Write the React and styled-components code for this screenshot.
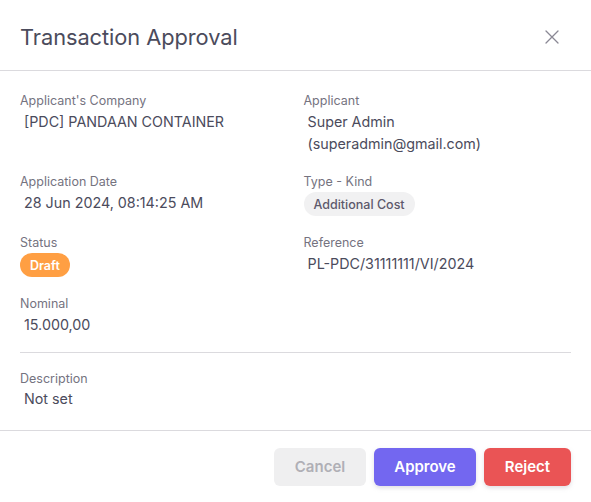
import React from "react";
import styled, { createGlobalStyle } from "styled-components";

const Global = createGlobalStyle`
  html, body { margin: 0; padding: 0; background: #fff; }
  body { font-family: "Inter", "Noto Sans", sans-serif; -webkit-font-smoothing: antialiased; }
`;

const Dialog = styled.div`
  width: 591px;
  height: 502px;
  background: #fff;
  display: flex;
  flex-direction: column;
  box-sizing: border-box;
`;

const Header = styled.div`
  height: 71px;
  box-sizing: border-box;
  display: flex;
  align-items: center;
  justify-content: space-between;
  padding: 3px 31px 0 20px;
  border-bottom: 1px solid #dbdade;
`;

const Title = styled.h2`
  margin: 0;
  font-size: 21.8px;
  font-weight: 400;
  color: #4b4b5c;
  letter-spacing: -0.05px;
`;

const CloseBtn = styled.button`
  border: 0;
  background: none;
  padding: 0;
  display: flex;
  color: #8a8894;
  cursor: pointer;
`;

const Body = styled.div`
  padding: 21px 20px 0;
  flex: 1;
`;

const Grid = styled.div`
  display: grid;
  grid-template-columns: 1fr 1fr;
  column-gap: 16px;
  row-gap: 18px;
`;

const Field = styled.div`
  display: flex;
  flex-direction: column;
  align-items: flex-start;
`;

const Label = styled.div`
  font-size: 12.5px;
  line-height: 18px;
  color: #75737f;
`;

const Value = styled.div`
  font-size: 14.3px;
  line-height: 22px;
  color: #4b4b5c;
  padding-left: 4px;
  margin-top: ${p => (p.$tight ? 0 : 1)}px;
`;

const Chip = styled.span`
  display: inline-flex;
  align-items: center;
  height: 24px;
  margin-top: 1px;
  padding: 0 10px;
  border-radius: 12px;
  font-size: 12.5px;
  font-weight: ${p => (p.$tone === "warning" ? 600 : 500)};
  background: ${p => (p.$tone === "warning" ? "#ff9f43" : "#f1f1f2")};
  color: ${p => (p.$tone === "warning" ? "#fff" : "#5d596c")};
`;

const Divider = styled.hr`
  border: 0;
  border-top: 1px solid #dbdade;
  margin: 16px 0 17px;
`;

const Footer = styled.div`
  border-top: 1px solid #dbdade;
  height: 72px;
  box-sizing: border-box;
  display: flex;
  align-items: center;
  justify-content: flex-end;
  gap: 8px;
  padding: 0 20px 0;
`;

const Button = styled.button`
  height: 38px;
  border: 0;
  border-radius: 6px;
  font-family: inherit;
  font-size: 15px;
  font-weight: 600;
  cursor: pointer;
  width: ${p => p.$w}px;
  background: ${p => ({ primary: "#7367f0", danger: "#ea5455", muted: "#efeff0" }[p.$variant])};
  color: ${p => (p.$variant === "muted" ? "#b0afb6" : "#fff")};
  box-shadow: ${p => (p.$variant === "muted" ? "none" : "0 2px 4px rgba(165,163,174,0.35)")};
`;

const fields = [
  { label: "Applicant's Company", value: "[PDC] PANDAAN CONTAINER" },
  { label: "Applicant", value: ["Super Admin", "(superadmin@gmail.com)"] },
  { label: "Application Date", value: "28 Jun 2024, 08:14:25 AM" },
  { label: "Type - Kind", chip: "Additional Cost" },
  { label: "Status", chip: "Draft", tone: "warning" },
  { label: "Reference", value: "PL-PDC/31111111/VI/2024" },
  { label: "Nominal", value: "15.000,00" },
];

export default function App() {
  return (
    <>
      <Global />
      <Dialog>
        <Header>
          <Title>Transaction Approval</Title>
          <CloseBtn aria-label="close">
            <svg width="16" height="16" viewBox="0 0 16 16" fill="none" stroke="currentColor" strokeWidth="1.3" strokeLinecap="round">
              <path d="M2 2L14 14M14 2L2 14" />
            </svg>
          </CloseBtn>
        </Header>
        <Body>
          <Grid>
            {fields.map(f => (
              <Field key={f.label}>
                <Label>{f.label}</Label>
                {f.chip ? (
                  <Chip $tone={f.tone}>{f.chip}</Chip>
                ) : (
                  <Value>
                    {Array.isArray(f.value)
                      ? f.value.map(v => <div key={v}>{v}</div>)
                      : f.value}
                  </Value>
                )}
              </Field>
            ))}
          </Grid>
          <Divider />
          <Field>
            <Label>Description</Label>
            <Value $tight>Not set</Value>
          </Field>
        </Body>
        <Footer>
          <Button $variant="muted" $w={92}>Cancel</Button>
          <Button $variant="primary" $w={102}>Approve</Button>
          <Button $variant="danger" $w={87}>Reject</Button>
        </Footer>
      </Dialog>
    </>
  );
}
